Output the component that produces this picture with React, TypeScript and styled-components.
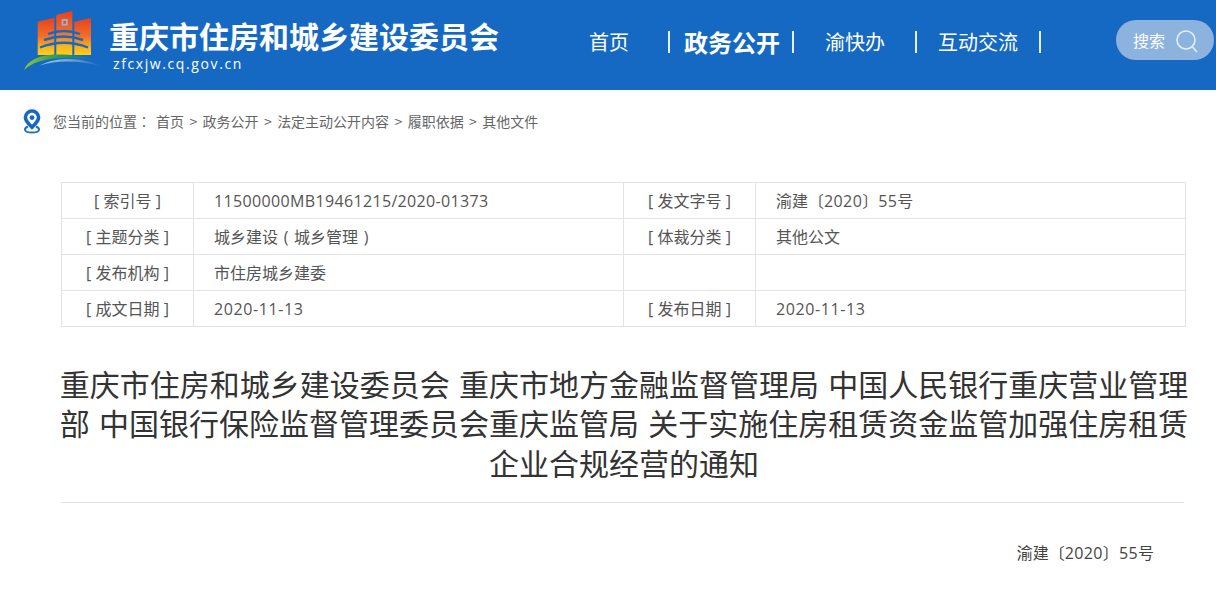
import React from "react";
import styled, { createGlobalStyle } from "styled-components";

const GlobalStyle = createGlobalStyle`
  html, body {
    margin: 0;
    padding: 0;
    background: #fff;
    overflow: hidden;
  }
  body {
    font-family: "Noto Sans CJK SC", "Liberation Sans", sans-serif;
  }
`;

const Page = styled.div`
  width: 1216px;
  height: 591px;
  overflow: hidden;
`;

const Header = styled.header`
  height: 90px;
  background: #1569c3;
  display: flex;
  align-items: flex-start;
`;

const Brand = styled.div`
  width: 589px;
  padding: 9px 0 0 23px;
  box-sizing: border-box;
  display: flex;
  gap: 4px;
`;

const BrandText = styled.div`
  padding-top: 7px;
  color: #fff;
`;

const SiteName = styled.div`
  font-size: 30px;
  line-height: 38px;
  font-weight: 700;
  white-space: nowrap;
`;

const SiteUrl = styled.div`
  font-family: "Open Sans", "Liberation Sans", sans-serif;
  font-size: 14px;
  line-height: 18px;
  letter-spacing: 1.6px;
  margin: 1px 0 0 4px;
`;

const Nav = styled.nav`
  display: flex;
  align-items: center;
  height: 84px;
  width: 527px;
  color: #fff;
`;

const NavItem = styled.a<{ $width: number; $gap: number; $active?: boolean }>`
  width: ${({ $width }) => $width}px;
  margin-left: ${({ $gap }) => $gap}px;
  flex: none;
  font-size: ${({ $active }) => ($active ? 24 : 20)}px;
  font-weight: ${({ $active }) => ($active ? 700 : 400)};
  line-height: 28px;
  white-space: nowrap;
`;

const NavBar = styled.span`
  flex: none;
  width: 2px;
  height: 22px;
  background: #e6f0fa;
`;

const SearchBox = styled.div`
  width: 98px;
  height: 40px;
  margin-top: 20px;
  border-radius: 20px;
  background: #8cb3de;
  color: #fff;
  font-size: 16px;
  display: flex;
  align-items: center;
  padding-left: 17px;
  box-sizing: border-box;
  gap: 8px;
`;

const Crumbs = styled.div`
  height: 92px;
  padding: 0 0 30px 22px;
  box-sizing: border-box;
  display: flex;
  align-items: center;
  gap: 11px;
  font-size: 14px;
  color: #666;
  white-space: nowrap;
`;

const CrumbLabel = styled.span`
  margin-right: 5px;
`;

const CrumbLink = styled.span`
  &:not(:last-child)::after {
    content: ">";
    margin: 0 5.4px;
  }
`;

const Colon = styled.span`
  font-family: "Noto Sans CJK TC", sans-serif;
`;

const Paren = styled.span`
  display: inline-block;
  width: 16px;
  text-align: center;
`;

const Num = styled.span<{ $spacing: number }>`
  letter-spacing: ${({ $spacing }) => $spacing}px;
`;

const InfoGrid = styled.div`
  margin-left: 61px;
  width: 1125px;
  display: grid;
  grid-template-columns: 132px 430px 132px 430px;
  border-top: 1px solid #e3e3e3;
  border-left: 1px solid #e3e3e3;
  box-sizing: border-box;
`;

const Cell = styled.div<{ $label?: boolean }>`
  height: 36px;
  box-sizing: border-box;
  border-right: 1px solid #e3e3e3;
  border-bottom: 1px solid #e3e3e3;
  font-family: "Open Sans", "Noto Sans CJK SC", sans-serif;
  font-size: 16px;
  line-height: 37px;
  color: #555;
  white-space: nowrap;
  text-align: ${({ $label }) => ($label ? "center" : "left")};
  padding-left: ${({ $label }) => ($label ? 0 : 20)}px;
`;

const Title = styled.h1`
  margin: 37px 26px 0 58px;
  font-size: 30px;
  line-height: 39.3px;
  font-weight: 400;
  word-spacing: 2.5px;
  color: #333;
  text-align: center;
`;

const Divider = styled.hr`
  margin: 20px 32px 0 61px;
  border: 0;
  border-top: 1px solid #e3e3e3;
`;

const DocNumber = styled.div`
  margin-top: 38px;
  padding-right: 62px;
  text-align: right;
  font-family: "Open Sans", "Noto Sans CJK SC", sans-serif;
  font-size: 16px;
  line-height: 24px;
  color: #444;
`;

const date = <Num $spacing={0.6}>2020-11-13</Num>;
const docNo = (
  <>
    渝建〔<Num $spacing={0.4}>2020</Num>〕<Num $spacing={0.4}>55</Num>号
  </>
);

const rows: [string, React.ReactNode, string, React.ReactNode][] = [
  ["[ 索引号 ]", <Num $spacing={0.35}>11500000MB19461215/2020-01373</Num>, "[ 发文字号 ]", docNo],
  [
    "[ 主题分类 ]",
    <>
      城乡建设<Paren>(</Paren>城乡管理<Paren>)</Paren>
    </>,
    "[ 体裁分类 ]",
    "其他公文",
  ],
  ["[ 发布机构 ]", "市住房城乡建委", "", ""],
  ["[ 成文日期 ]", date, "[ 发布日期 ]", date],
];

const crumbs = ["首页", "政务公开", "法定主动公开内容", "履职依据", "其他文件"];

function Logo() {
  return (
    <svg width="82" height="64" viewBox="0 0 82 64">
      <defs>
        <linearGradient id="tower" x1="0" y1="0" x2="0" y2="1">
          <stop offset="0" stopColor="#e8401f" />
          <stop offset="0.5" stopColor="#f0702a" />
          <stop offset="0.8" stopColor="#fbb31c" />
          <stop offset="1" stopColor="#fdd01a" />
        </linearGradient>
        <linearGradient id="arc" x1="0" y1="0" x2="1" y2="0">
          <stop offset="0" stopColor="#8cc63f" />
          <stop offset="0.45" stopColor="#2e9a52" />
          <stop offset="1" stopColor="#1569c3" />
        </linearGradient>
        <linearGradient id="arc2" x1="0" y1="0" x2="1" y2="0">
          <stop offset="0" stopColor="#8fc4f0" />
          <stop offset="0.5" stopColor="#6ea3d8" />
          <stop offset="1" stopColor="#1569c3" />
        </linearGradient>
      </defs>
      <path fill="url(#tower)" d="M14.7 12.7 L31.3 8.7 V46 H14.7 Z" />
      <path fill="url(#tower)" d="M33.3 6 L49.3 1.7 V46 H33.3 Z" />
      <path fill="url(#tower)" d="M51.3 12.7 L68 9 V46 H51.3 Z" />
      <path fill="#8fb6e0" d="M38.7 10 h6 v6.5 h-6 z" />
      <path fill="#e8501f" d="M40.4 11.8 h2.6 v3 h-2.6 z" />
      <path
        fill="none"
        stroke="#1569c3"
        strokeWidth="2.4"
        d="M25 25 Q41 19 57 25 M21 31 Q41 24 60 31 M17 38.5 Q41 29 65 38.5"
      />
      <path fill="url(#arc)" d="M1.3 61 C4 52 16 45.5 34 45.5 C50 45.5 62 47 74 52 C60 49 44 48.5 32 49.5 C20 50.5 8 54 1.3 61 Z" />
      <path fill="url(#arc2)" d="M17 56.5 C26 51 38 50 46 50 C58 50 70 53 80 58 C68 54 56 52.5 44 52.5 C34 52.5 25 54 17 56.5 Z" />
    </svg>
  );
}

function PinIcon() {
  return (
    <svg width="20" height="26" viewBox="0 0 20 26">
      <path fill="none" stroke="#1f72c4" strokeWidth="2" d="M6 18.5 C1.5 20.5 1.5 24.5 10 24.5 C18.5 24.5 18.5 20.5 14 18.5" />
      <path
        fill="none"
        stroke="#1569c3"
        strokeWidth="3.6"
        d="M10 3 a6.6 6.6 0 0 1 6.6 6.6 c0 3.6-3.6 6.8-6.6 9.6 c-3-2.8-6.6-6-6.6-9.6 A6.6 6.6 0 0 1 10 3 Z"
      />
      <circle cx="10" cy="9.6" r="2.4" fill="#1569c3" />
    </svg>
  );
}

function SearchIcon() {
  return (
    <svg width="26" height="26" viewBox="0 0 26 26" fill="none" stroke="#e2edf8" strokeWidth="1.6">
      <circle cx="13" cy="13" r="9" />
      <path d="M19.5 20 L24 25" />
    </svg>
  );
}

export default function App() {
  return (
    <Page>
      <GlobalStyle />
      <Header>
        <Brand>
          <Logo />
          <BrandText>
            <SiteName>重庆市住房和城乡建设委员会</SiteName>
            <SiteUrl>zfcxjw.cq.gov.cn</SiteUrl>
          </BrandText>
        </Brand>
        <Nav>
          <NavItem $width={79} $gap={0}>首页</NavItem>
          <NavBar />
          <NavItem $width={108} $gap={14} $active>政务公开</NavItem>
          <NavBar />
          <NavItem $width={90} $gap={31}>渝快办</NavItem>
          <NavBar />
          <NavItem $width={101} $gap={21}>互动交流</NavItem>
          <NavBar />
        </Nav>
        <SearchBox>
          搜索
          <SearchIcon />
        </SearchBox>
      </Header>
      <Crumbs>
        <PinIcon />
        <div>
          <CrumbLabel>
            您当前的位置<Colon>：</Colon>
          </CrumbLabel>
          {crumbs.map((c) => (
            <CrumbLink key={c}>{c}</CrumbLink>
          ))}
        </div>
      </Crumbs>
      <InfoGrid>
        {rows.map((r) =>
          r.map((text, i) => (
            <Cell key={r[0] + i} $label={i % 2 === 0}>
              {text}
            </Cell>
          ))
        )}
      </InfoGrid>
      <Title>
        重庆市住房和城乡建设委员会 重庆市地方金融监督管理局 中国人民银行重庆营业管理部 中国银行保险监督管理委员会重庆监管局 关于实施住房租赁资金监管加强住房租赁企业合规经营的通知
      </Title>
      <Divider />
      <DocNumber>{docNo}</DocNumber>
    </Page>
  );
}
